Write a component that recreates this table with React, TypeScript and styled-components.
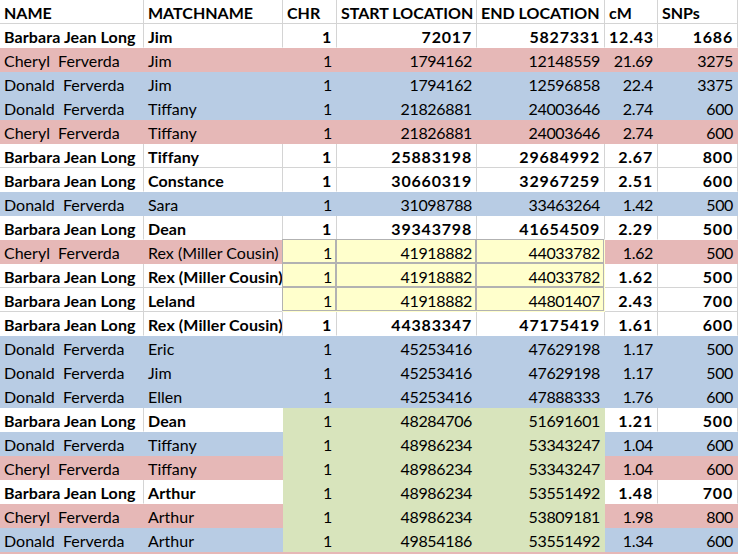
import * as React from 'react';
import styled, { createGlobalStyle } from 'styled-components';

type Tone = 'white' | 'pink' | 'blue' | 'yellow' | 'green';

interface Segment {
  name: string;
  match: string;
  chr: string;
  start: string;
  end: string;
  cm: string;
  snps: string;
  tone: Tone;
  mid?: Tone;
}

const BARBARA = 'Barbara Jean Long';
const CHERYL = 'Cheryl  Ferverda';
const DONALD = 'Donald  Ferverda';
const REX = 'Rex (Miller Cousin)';

const headers = ['NAME', 'MATCHNAME', 'CHR', 'START LOCATION', 'END LOCATION', 'cM', 'SNPs'];
const columnWidths = [144, 139, 54, 140, 128, 53, 80];
// numbers sit on the right, names on the left
const numeric = [false, false, true, true, true, true, true];

const segments: Segment[] = [
  { name: BARBARA, match: 'Jim', chr: '1', start: '72017', end: '5827331', cm: '12.43', snps: '1686', tone: 'white' },
  { name: CHERYL, match: 'Jim', chr: '1', start: '1794162', end: '12148559', cm: '21.69', snps: '3275', tone: 'pink' },
  { name: DONALD, match: 'Jim', chr: '1', start: '1794162', end: '12596858', cm: '22.4', snps: '3375', tone: 'blue' },
  { name: DONALD, match: 'Tiffany', chr: '1', start: '21826881', end: '24003646', cm: '2.74', snps: '600', tone: 'blue' },
  { name: CHERYL, match: 'Tiffany', chr: '1', start: '21826881', end: '24003646', cm: '2.74', snps: '600', tone: 'pink' },
  { name: BARBARA, match: 'Tiffany', chr: '1', start: '25883198', end: '29684992', cm: '2.67', snps: '800', tone: 'white' },
  { name: BARBARA, match: 'Constance', chr: '1', start: '30660319', end: '32967259', cm: '2.51', snps: '600', tone: 'white' },
  { name: DONALD, match: 'Sara', chr: '1', start: '31098788', end: '33463264', cm: '1.42', snps: '500', tone: 'blue' },
  { name: BARBARA, match: 'Dean', chr: '1', start: '39343798', end: '41654509', cm: '2.29', snps: '500', tone: 'white' },
  { name: CHERYL, match: REX, chr: '1', start: '41918882', end: '44033782', cm: '1.62', snps: '500', tone: 'pink', mid: 'yellow' },
  { name: BARBARA, match: REX, chr: '1', start: '41918882', end: '44033782', cm: '1.62', snps: '500', tone: 'white', mid: 'yellow' },
  { name: BARBARA, match: 'Leland', chr: '1', start: '41918882', end: '44801407', cm: '2.43', snps: '700', tone: 'white', mid: 'yellow' },
  { name: BARBARA, match: REX, chr: '1', start: '44383347', end: '47175419', cm: '1.61', snps: '600', tone: 'white' },
  { name: DONALD, match: 'Eric', chr: '1', start: '45253416', end: '47629198', cm: '1.17', snps: '500', tone: 'blue' },
  { name: DONALD, match: 'Jim', chr: '1', start: '45253416', end: '47629198', cm: '1.17', snps: '500', tone: 'blue' },
  { name: DONALD, match: 'Ellen', chr: '1', start: '45253416', end: '47888333', cm: '1.76', snps: '600', tone: 'blue' },
  { name: BARBARA, match: 'Dean', chr: '1', start: '48284706', end: '51691601', cm: '1.21', snps: '500', tone: 'white', mid: 'green' },
  { name: DONALD, match: 'Tiffany', chr: '1', start: '48986234', end: '53343247', cm: '1.04', snps: '600', tone: 'blue', mid: 'green' },
  { name: CHERYL, match: 'Tiffany', chr: '1', start: '48986234', end: '53343247', cm: '1.04', snps: '600', tone: 'pink', mid: 'green' },
  { name: BARBARA, match: 'Arthur', chr: '1', start: '48986234', end: '53551492', cm: '1.48', snps: '700', tone: 'white', mid: 'green' },
  { name: CHERYL, match: 'Arthur', chr: '1', start: '48986234', end: '53809181', cm: '1.98', snps: '800', tone: 'pink', mid: 'green' },
  { name: DONALD, match: 'Arthur', chr: '1', start: '49854186', end: '53551492', cm: '1.34', snps: '600', tone: 'blue', mid: 'green' },
  // next row, only its top edge is on screen
  { name: '', match: '', chr: '', start: '', end: '', cm: '', snps: '', tone: 'pink' },
];

const fills: Record<Tone, string> = {
  white: '#ffffff',
  pink: '#e6b8b7',
  blue: '#b8cce4',
  yellow: '#ffffcc',
  green: '#d8e4bc',
};

const GRID_LINE = '#d4d4d4';
const NOTE_LINE = '#b2b2b2';

const GlobalStyle = createGlobalStyle`
  html, body {
    margin: 0;
    padding: 0;
    background: #ffffff;
    overflow: hidden;
  }
`;

const Sheet = styled.div`
  display: grid;
  grid-template-columns: ${columnWidths.map(w => `${w}px`).join(' ')};
  grid-auto-rows: 24px;
  width: 740px;
  height: 554px;
  overflow: hidden;
  font-family: Lato, 'Open Sans', sans-serif;
  font-size: 16px;
  color: #000000;
`;

interface CellProps {
  $tone: Tone;
  $bold: boolean;
  $right: boolean;
  $head?: boolean;
  $lineRight: boolean;
  $lineBottom: boolean;
}

// Calibri-like spacing: bold digits run wide, plain digits run narrow
function spacing(p: CellProps) {
  if (p.$head) return '0';
  if (p.$right) return p.$bold ? '0.8px' : '-0.35px';
  return p.$bold ? '0.1px' : '0';
}

const Cell = styled.div<CellProps>`
  box-sizing: border-box;
  padding: ${p => (p.$right ? '1px 4px 0 4px' : '1px 0 0 4px')};
  line-height: 24px;
  white-space: pre;
  overflow: hidden;
  background: ${p => fills[p.$tone]};
  font-weight: ${p => (p.$bold ? 700 : 400)};
  letter-spacing: ${spacing};
  text-align: ${p => (p.$right ? 'right' : 'left')};
  border-right: 1px solid ${p => (p.$lineRight ? GRID_LINE : 'transparent')};
  border-bottom: 1px solid ${p => (p.$lineBottom ? GRID_LINE : 'transparent')};
  ${p => p.$tone === 'yellow' && `
    border-color: transparent;
    box-shadow: inset -1px -1px 0 ${NOTE_LINE}, -1px -1px 0 ${NOTE_LINE};
  `}
`;

function rowValues(row: Segment) {
  return [row.name, row.match, row.chr, row.start, row.end, row.cm, row.snps];
}

function toneAt(row: Segment | undefined, col: number): Tone {
  if (!row) return 'white';
  if (row.mid && col >= 2 && col <= 4) return row.mid;
  return row.tone;
}

export default function App() {
  return (
    <>
      <GlobalStyle />
      <Sheet>
        {headers.map((title, col) => (
          <Cell
            key={title}
            $tone="white"
            $bold
            $head
            $right={false}
            $lineRight
            $lineBottom={toneAt(segments[0], col) === 'white'}
          >
            {title}
          </Cell>
        ))}
        {segments.map((row, r) =>
          rowValues(row).map((value, col) => {
            const tone = toneAt(row, col);
            const plain = tone === 'white';
            const rightTone = col < 6 ? toneAt(row, col + 1) : 'white';
            return (
              <Cell
                key={`${r}-${col}`}
                $tone={tone}
                $bold={plain}
                $right={numeric[col]}
                $lineRight={plain && rightTone === 'white'}
                $lineBottom={plain && toneAt(segments[r + 1], col) === 'white'}
              >
                {value}
              </Cell>
            );
          })
        )}
      </Sheet>
    </>
  );
}
